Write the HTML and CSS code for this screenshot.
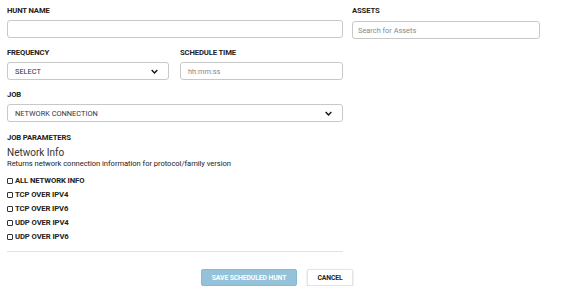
FILE: index.html
```html
<!DOCTYPE html>
<html>
<head>
<meta charset="utf-8">
<link rel="stylesheet" href="styles.css">
</head>
<body>
<div class="page">
  <div class="grid">
    <div class="left">
      <div class="field">
        <div class="label">HUNT NAME</div>
        <div class="input"></div>
      </div>
      <div class="row">
        <div class="field">
          <div class="label">FREQUENCY</div>
          <div class="input select"><span>SELECT</span><svg class="chev" viewBox="0 0 10 6" width="7" height="5"><path d="M1 1 L5 5 L9 1" fill="none" stroke="#111" stroke-width="2"/></svg></div>
        </div>
        <div class="field">
          <div class="label">SCHEDULE TIME</div>
          <div class="input"><span class="ph">hh:mm:ss</span></div>
        </div>
      </div>
      <div class="field">
        <div class="label">JOB</div>
        <div class="input select"><span>NETWORK CONNECTION</span><svg class="chev" viewBox="0 0 10 6" width="7" height="5"><path d="M1 1 L5 5 L9 1" fill="none" stroke="#111" stroke-width="2"/></svg></div>
      </div>
      <div class="params">
        <div class="label">JOB PARAMETERS</div>
        <div class="title">Network Info</div>
        <div class="desc">Returns network connection information for protocol/family version</div>
        <ul class="checks">
          <li><span class="box"></span>ALL NETWORK INFO</li>
          <li><span class="box"></span>TCP OVER IPV4</li>
          <li><span class="box"></span>TCP OVER IPV6</li>
          <li><span class="box"></span>UDP OVER IPV4</li>
          <li><span class="box"></span>UDP OVER IPV6</li>
        </ul>
        <div class="divider"></div>
      </div>
    </div>
    <div class="right">
      <div class="field">
        <div class="label">ASSETS</div>
        <div class="input"><span class="ph">Search for Assets</span></div>
      </div>
    </div>
  </div>
  <div class="actions">
    <button class="btn primary">SAVE SCHEDULED HUNT</button>
    <button class="btn secondary">CANCEL</button>
  </div>
</div>
</body>
</html>
```
FILE: styles.css
```css
* { box-sizing: border-box; }
html, body { margin: 0; padding: 0; background: #fff; }
body { font-family: Roboto, "Liberation Sans", Arial, sans-serif; color: #222; }
.page { width: 547px; padding: 6px 0 0 7px; }
.grid { display: grid; grid-template-columns: 336px 188px; column-gap: 9px; }
.left { display: flex; flex-direction: column; gap: 10px; }
.row { display: grid; grid-template-columns: 162px 163px; column-gap: 11px; }
.label { font-size: 7.7px; font-weight: 700; line-height: 10px; height: 10px; color: #222; margin-bottom: 4px; letter-spacing: -0.15px; }
.input { height: 18px; border: 1px solid #c8c8c8; border-radius: 3px; display: flex; align-items: center; padding: 0 8px 0 7px; font-size: 7.4px; color: #333; justify-content: space-between; }
.ph { color: #888; }
.right .field .label { margin-bottom: 5px; }
.right .input .ph { margin-left: -2px; }
.chev { margin-right: 2px; }
.params { margin-top: 1px; }
.params .label { margin-bottom: 4px; }
.title { font-size: 10px; line-height: 12px; color: #333; }
.desc { font-size: 7.6px; line-height: 9px; color: #222; letter-spacing: -0.05px; }
.checks { list-style: none; margin: 8px 0 0; padding: 0; display: flex; flex-direction: column; gap: 4px; }
.checks li { font-size: 7.7px; font-weight: 700; line-height: 10px; height: 10px; display: flex; align-items: center; gap: 2px; color: #222; letter-spacing: -0.1px; }
.box { width: 6px; height: 6px; border: 1px solid #333; border-radius: 1px; display: inline-block; }
.divider { height: 1px; background: #e2e2e2; margin-top: 9px; width: 336px; }
.actions { display: flex; justify-content: center; gap: 10px; margin-top: 17px; }
.btn { height: 17px; font-family: inherit; font-size: 6.8px; font-weight: 700; border-radius: 2px; padding: 0; cursor: pointer; letter-spacing: -0.1px; }
.primary { width: 96px; background: #94c2db; color: #fff; border: 1px solid #88b8d2; }
.secondary { width: 46px; background: #fff; color: #222; border: 1px solid #e4e4e4; box-shadow: 0 1px 2px rgba(0,0,0,0.2); }
```
